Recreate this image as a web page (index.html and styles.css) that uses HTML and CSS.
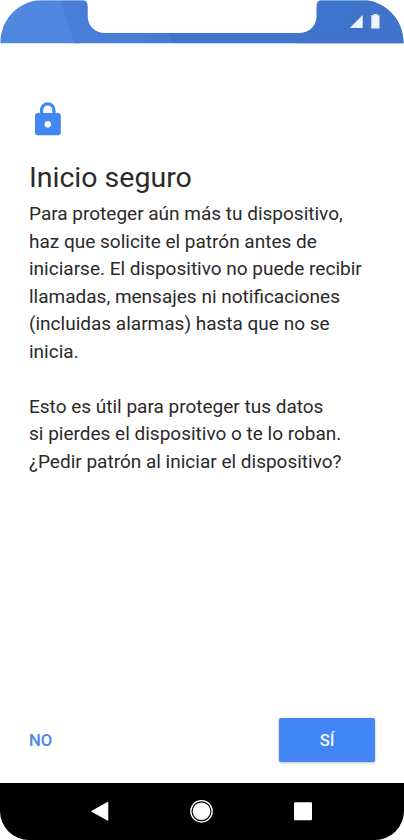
FILE: index.html
```html
<!DOCTYPE html>
<html lang="es">

<head>
    <meta charset="UTF-8">
    <meta name="viewport" content="width=device-width, initial-scale=1.0">
    <title>Inicio seguro</title>
    <link rel="stylesheet" href="styles.css">
</head>

<body>
    <div class="screen">
        <header class="status-bar">
            <svg class="status-shape" width="404" height="44" viewBox="0 0 404 44">
                <defs>
                    <clipPath id="notch">
                        <path d="M.5 43.3C.5 18 20 0 43 0H82Q87.7 0 87.7 6V16C87.7 26 95 33 105 33H300C309 33 316.500 26 316.500 16V6Q316.500 0 322 0H361C384 0 403.500 18 403.500 43.300Z" />
                    </clipPath>
                </defs>
                <g clip-path="url(#notch)">
                    <path fill="#4f86de" d="M0 0H80V44H0Z" />
                    <path fill="#4a7dd7" d="M60 0H150L144 44H75Z" />
                    <path fill="#467ad5" d="M146 0H175L172 44H144Z" />
                    <path fill="#4075cf" d="M155 0H404V44H172Z" />
                    <path fill="#4074cb" d="M299 30H342L352 0H404V44H298Z" />
                    <path fill="#fff" fill-opacity=".35" d="M0 0H404V1H0Z" />
                </g>
                <path fill="#f0f4ff" d="M349.800 28H362.700V15Z" />
                <path fill="#f0f4ff" d="M373.500 14h4v1.300h2v13.200h-8.200V15.300h2.200z" />
            </svg>
        </header>

        <main class="content">
            <svg class="lock-icon" width="26" height="34" viewBox="0 0 26 34">
                <path fill="none" stroke="#4285f4" stroke-width="3.200" d="M6.500 12V8.300a6.200 6.500 0 0 1 12.400 0V12" />
                <rect y="11" width="25.800" height="22.300" rx="2.800" fill="#4285f4" />
                <circle cx="12.800" cy="22.200" r="3.200" fill="#fff" />
            </svg>
            <h1>Inicio seguro</h1>
            <p>Para proteger aún más tu dispositivo,<br>
                haz que solicite el patrón antes de<br>
                iniciarse. El dispositivo no puede recibir<br>
                llamadas, mensajes ni notificaciones<br>
                (incluidas alarmas) hasta que no se<br>
                inicia.</p>
            <p>Esto es útil para proteger tus datos<br>
                si pierdes el dispositivo o te lo roban.<br>
                ¿Pedir patrón al iniciar el dispositivo?</p>
        </main>

        <div class="actions">
            <button class="no-btn">NO</button>
            <button class="yes-btn">SÍ</button>
        </div>

        <nav class="nav-bar">
            <svg class="nav-icon" width="24" height="24" viewBox="0 0 24 24">
                <path fill="#fff" stroke="#fff" stroke-linejoin="round" d="M3.700 12.300 19.800 3.300V21.300Z" />
            </svg>
            <svg class="nav-icon" width="24" height="24" viewBox="0 0 24 24">
                <circle cx="11.500" cy="12.300" r="10.700" fill="none" stroke="#fff" stroke-width="1.300" />
                <circle cx="11.500" cy="12.300" r="8.800" fill="#fff" />
            </svg>
            <svg class="nav-icon" width="24" height="24" viewBox="0 0 24 24">
                <rect x="3" y="3.300" width="18" height="18" rx="1" fill="#fff" />
            </svg>
        </nav>
    </div>
</body>

</html>
```

FILE: styles.css
```css
body {
    font-family: Roboto, sans-serif;
    background-color: #fff;
    margin: 0;
}

.screen {
    display: flex;
    flex-direction: column;
    width: 404px;
    height: 840px;
    overflow: hidden;
}

.status-bar {
    height: 44px;
}

.status-shape {
    display: block;
}

/* CONTENT */
.content {
    flex: 1;
    padding: 58px 20px 0 29px;
    color: #2a2a2a;
}

.lock-icon {
    display: block;
    margin-left: 6px;
}

.content h1 {
    margin: 23px 0 4px;
    font-size: 28.5px;
    font-weight: 400;
    line-height: 37px;
}

.content p {
    margin: 0 0 27.5px;
    font-size: 19px;
    line-height: 27.5px;
    white-space: nowrap;
}

/* BUTTONS */
.actions {
    display: flex;
    justify-content: space-between;
    align-items: center;
    padding: 0 29px 21px;
}

.no-btn,
.yes-btn {
    border: none;
    font-family: inherit;
    font-size: 16.6px;
    font-weight: 500;
    cursor: pointer;
}

.no-btn {
    padding: 0;
    background: none;
    color: #4b88e8;
}

.yes-btn {
    width: 96px;
    height: 44px;
    border-radius: 2px;
    background-color: #4285f4;
    color: #f1f6ff;
    box-shadow: 0 1px 3px rgba(0, 0, 0, 0.25);
}

/* NAVIGATION */
.nav-bar {
    display: flex;
    justify-content: space-between;
    align-items: center;
    height: 57px;
    padding: 0 89px 1px 88px;
    box-sizing: border-box;
    border-radius: 0 0 29px 29px;
    background-color: #000;
}

.nav-icon {
    display: block;
}
```
